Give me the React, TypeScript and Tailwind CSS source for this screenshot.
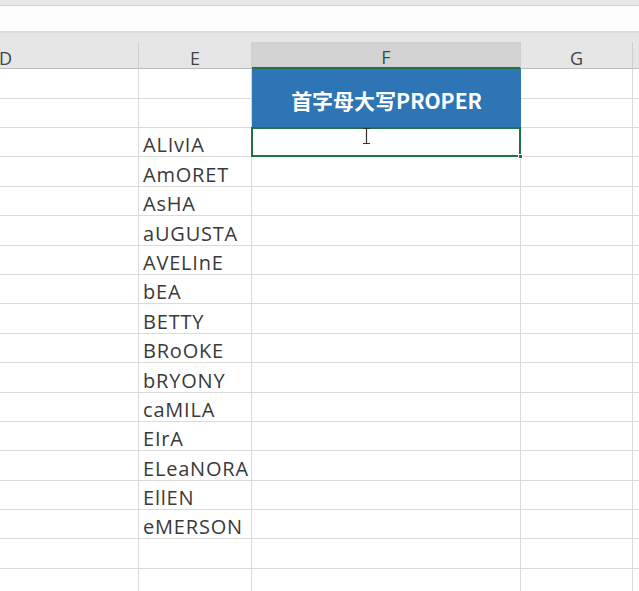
import React from "react";

const names = [
  "ALIvIA",
  "AmORET",
  "AsHA",
  "aUGUSTA",
  "AVELInE",
  "bEA",
  "BETTY",
  "BRoOKE",
  "bRYONY",
  "caMILA",
  "EIrA",
  "ELeaNORA",
  "EllEN",
  "eMERSON",
  "",
  "",
];

const line = "border-[#dadada]";

function HeaderCell({
  label,
  width,
  selected,
}: {
  label: string;
  width: string;
  selected?: boolean;
}) {
  return (
    <div
      className={`${width} flex h-full shrink-0 items-center justify-center border-r border-[#cfcfcf] pt-[6px] text-[18px] ${
        selected
          ? "border-b-2 border-b-[#217346] bg-[#d2d2d2] text-[#1d5c3d]"
          : "border-b border-b-[#bdbdbd] bg-[#e6e6e6] text-[#444]"
      }`}
    >
      {label}
    </div>
  );
}

function SelectedCell() {
  return (
    <div className={`relative h-full w-[269px] shrink-0 border-r border-b ${line}`}>
      <div className="absolute -top-px -left-px h-[calc(100%+2px)] w-[calc(100%+2px)] border-2 border-[#217346]" />
      <div className="absolute -right-[3px] -bottom-[3px] size-[5px] border border-white bg-[#217346]" />
      <svg
        className="absolute top-0 left-[110px]"
        width="9"
        height="17"
        viewBox="0 0 9 17"
      >
        <path d="M1 0.5h7M4.5 0.5v15M1 15.5h7" stroke="#333" strokeWidth="1.2" fill="none" />
      </svg>
    </div>
  );
}

export default function App() {
  return (
    <div
      className="h-[591px] w-[639px] overflow-hidden bg-white"
      style={{ fontFamily: '"Open Sans", "Noto Sans CJK SC", sans-serif' }}
    >
      <div className="h-[6px] border-b border-[#d0d0d0] bg-[#e8e8e8]" />
      <div className="h-[25px] bg-[#fdfdfd]" />
      <div className="h-[11px] border-t-2 border-[#dcdcdc] bg-[#e6e6e6]" />

      <div className="flex h-[27px] overflow-hidden">
        <div className="ml-[-127px] flex h-full">
          <HeaderCell label="D" width="w-[266px]" />
        </div>
        <HeaderCell label="E" width="w-[113px]" />
        <HeaderCell label="F" width="w-[269px]" selected />
        <HeaderCell label="G" width="w-[112px]" />
        <div className="h-full flex-1 border-b border-[#bdbdbd] bg-[#e6e6e6]" />
      </div>

      <div className="flex h-[59px]">
        <div className="flex w-[139px] shrink-0 flex-col">
          <div className={`h-[30px] border-r border-b ${line}`} />
          <div className={`h-[29px] border-r border-b ${line}`} />
        </div>
        <div className="flex w-[113px] shrink-0 flex-col">
          <div className={`h-[30px] border-r border-b ${line}`} />
          <div className={`h-[29px] border-r border-b ${line}`} />
        </div>
        <div
          className="flex w-[269px] shrink-0 items-center justify-center bg-[#2e75b6] pt-[5px] text-[21px] font-bold text-white"
          style={{ fontFamily: '"Noto Sans CJK SC", sans-serif' }}
        >
          首字母大写PROPER
        </div>
        <div className="flex w-[112px] shrink-0 flex-col">
          <div className={`h-[30px] border-r border-b ${line}`} />
          <div className={`h-[29px] border-r border-b ${line}`} />
        </div>
        <div className="flex flex-1 flex-col">
          <div className={`h-[30px] border-b ${line}`} />
          <div className={`h-[29px] border-b ${line}`} />
        </div>
      </div>

      {names.map((name, i) => (
        <div key={i} className="flex h-[29.4px]">
          <div className={`h-full w-[139px] shrink-0 border-r border-b ${line}`} />
          <div
            className={`flex h-full w-[113px] shrink-0 items-end overflow-visible border-r border-b pl-[4px] text-[20px] leading-none tracking-[0.8px] whitespace-nowrap text-[#3a3a3a] ${line}`}
          >
            <span className="relative z-10 mb-[1px]">{name}</span>
          </div>
          {i === 0 ? (
            <SelectedCell />
          ) : (
            <div className={`h-full w-[269px] shrink-0 border-r border-b ${line}`} />
          )}
          <div className={`h-full w-[112px] shrink-0 border-r border-b ${line}`} />
          <div className={`h-full flex-1 border-b ${line}`} />
        </div>
      ))}
    </div>
  );
}
